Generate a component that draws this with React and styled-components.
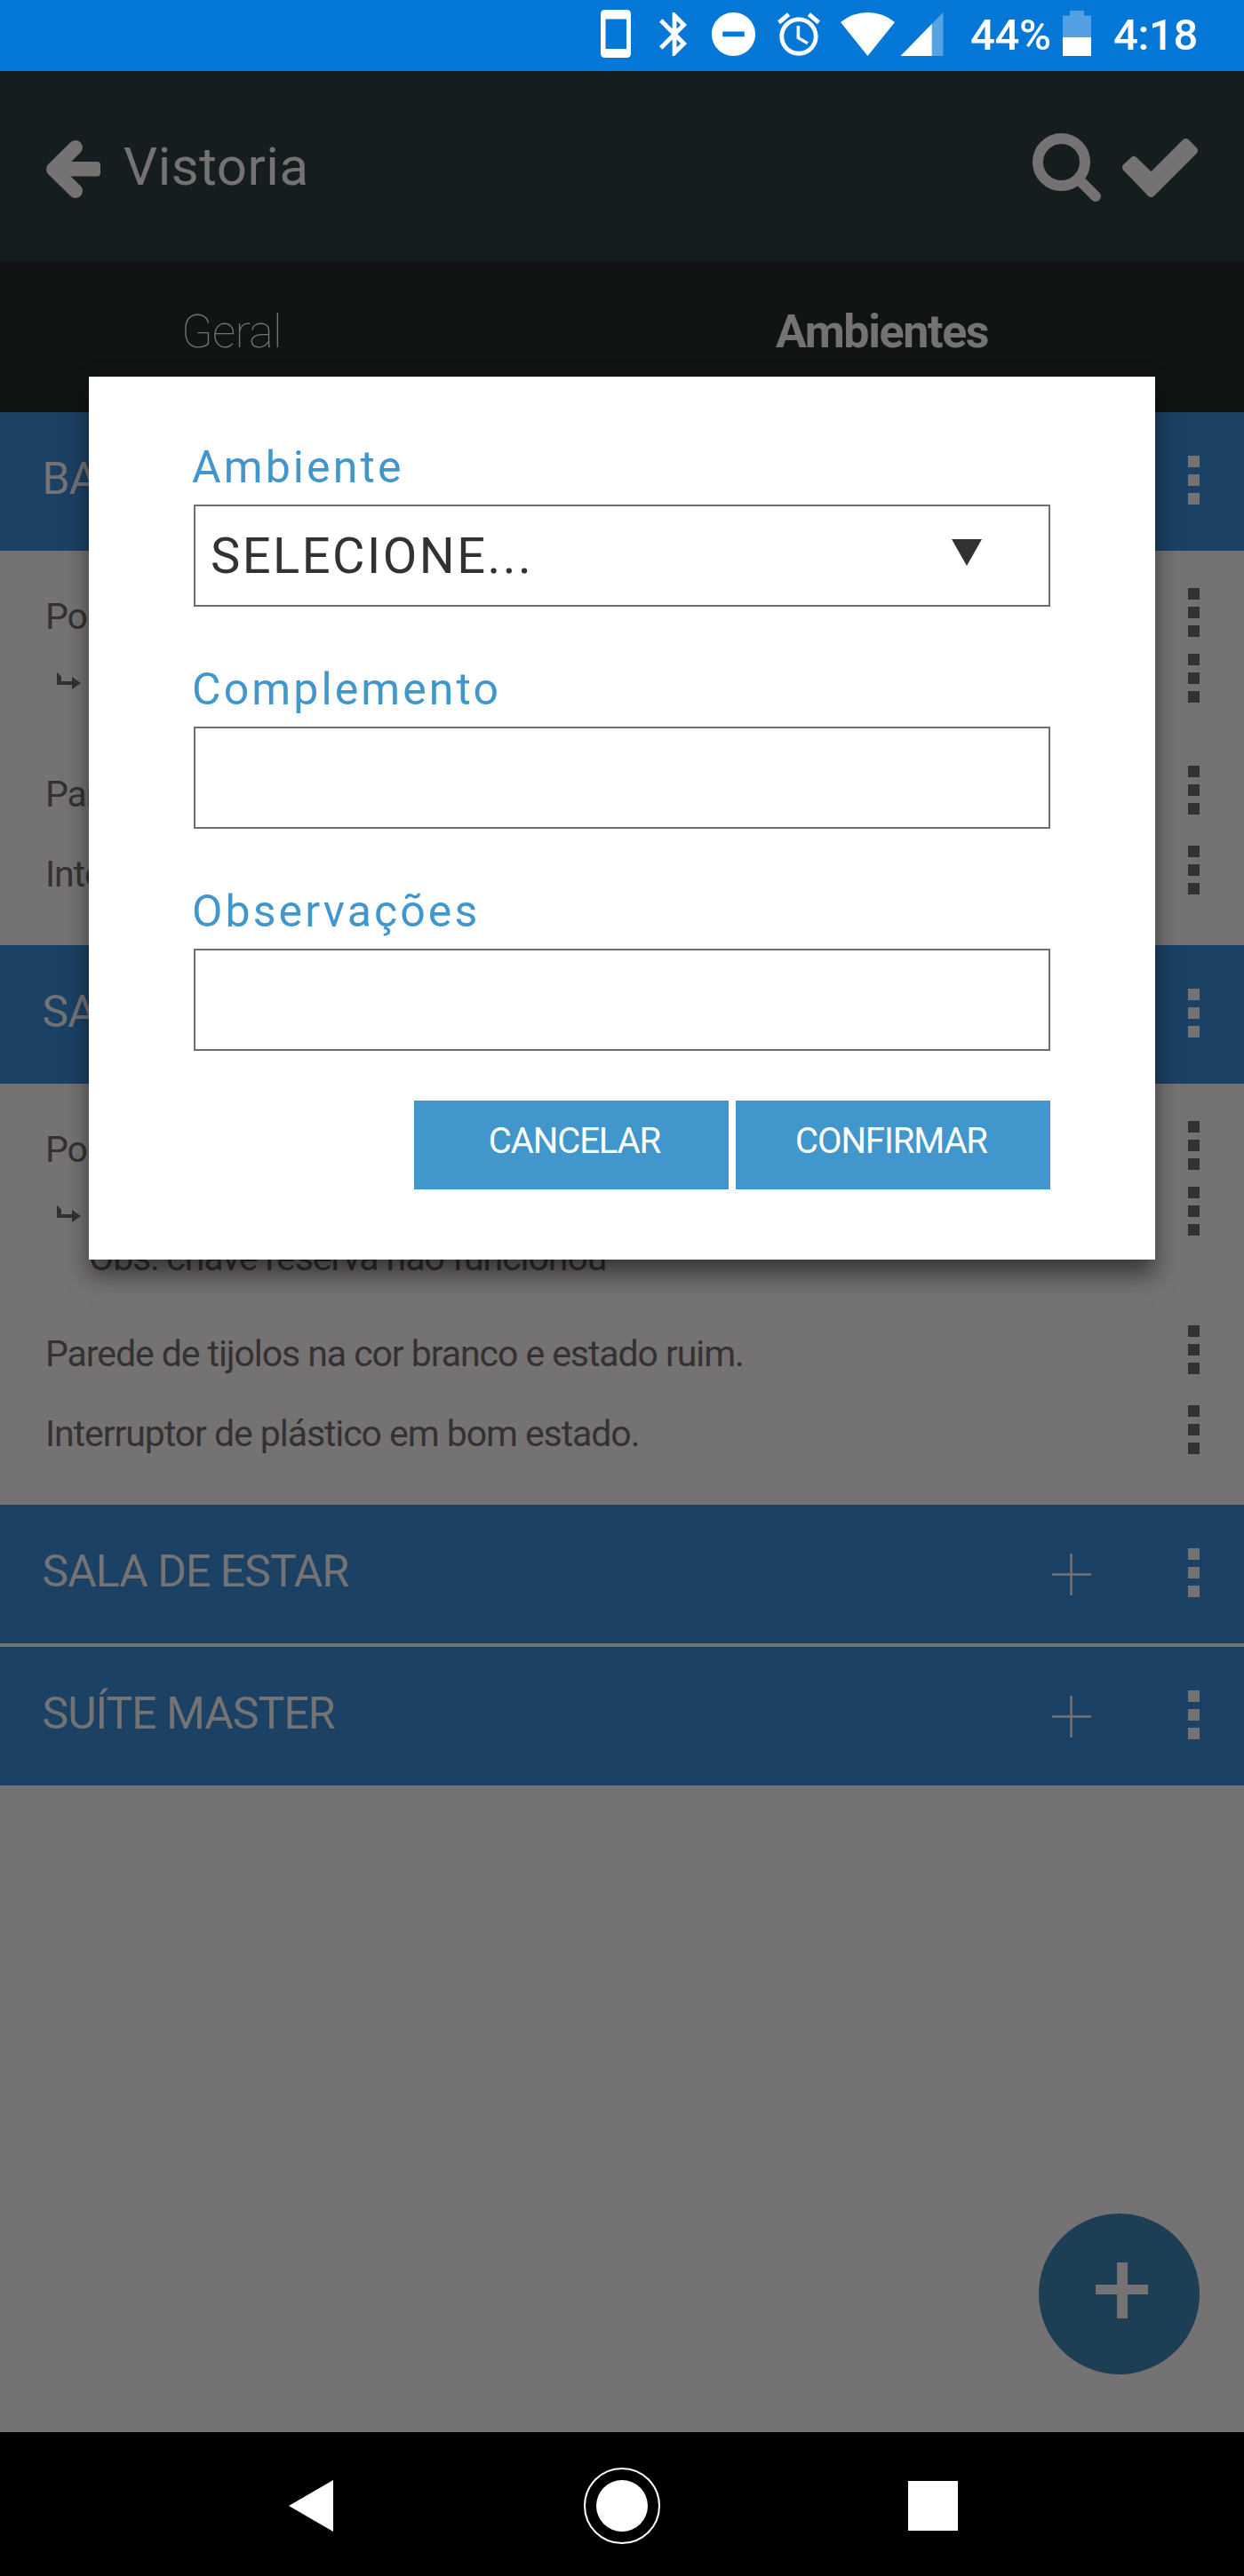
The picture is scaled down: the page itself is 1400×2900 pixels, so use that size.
import React from 'react'
import styled, { createGlobalStyle } from 'styled-components'

const GlobalStyle = createGlobalStyle`
    * {
        box-sizing: border-box;
    }
    body {
        margin: 0;
        font-family: Roboto, "Liberation Sans", sans-serif;
        background-color: #757273;
    }
`

const muted = '#757273'
const dark = '#343132'

const groups = [
    {
        name: 'BANHO',
        items: [
            { text: 'Porta', sub: true },
            { text: 'Parede', space: 71 },
            { text: 'Interruptor', space: 35 },
        ],
    },
    {
        name: 'SALA',
        items: [
            { text: 'Porta', sub: true, obs: 'Obs: chave reserva não funcionou' },
            { text: 'Parede de tijolos na cor branco e estado ruim.', space: 54 },
            { text: 'Interruptor de plástico em bom estado.', space: 35 },
        ],
    },
    { name: 'SALA DE ESTAR' },
    { name: 'SUÍTE MASTER' },
]

const Menu = ({ color }) => (
    <Dots $color={color}>
        <i />
        <i />
        <i />
    </Dots>
)

const StatusIcons = () => (
    <>
        <svg width="34" height="80" viewBox="0 0 34 80">
            <path fill="#fff" fillRule="evenodd" d="M5 11h24q5 0 5 5v44q0 5-5 5H5q-5 0-5-5V16q0-5 5-5zM5.500 21.500v33.500h23.500V21.500z" />
        </svg>
        <StatusSvg $left={32} width="31" height="49" viewBox="5 2 12.710 20" preserveAspectRatio="none">
            <path d="M17.710 7.710L12 2h-1v7.590L6.410 5 5 6.410 10.590 12 5 17.590 6.410 19 11 14.410V22h1l5.710-5.710-4.300-4.290 4.300-4.290zM13 5.830l1.880 1.880L13 9.590V5.830zm1.880 10.460L13 18.170v-3.760l1.880 1.880z" />
        </StatusSvg>
        <StatusSvg $left={28} width="49" height="49" viewBox="2 2 20 20">
            <path d="M12 2C6.480 2 2 6.480 2 12s4.480 10 10 10 10-4.480 10-10S17.520 2 12 2zm5 11.100H7v-2.300h10v2.300z" />
        </StatusSvg>
        <StatusSvg $left={25} width="48" height="49" viewBox="2 1.860 20 20.140">
            <path d="M22 5.720l-4.600-3.860-1.290 1.530 4.600 3.860L22 5.720zM7.880 3.390L6.600 1.860 2 5.710l1.290 1.530 4.590-3.850zM12.500 8H11v6l4.750 2.850.750-1.230-4-2.370V8zM12 4c-4.970 0-9 4.030-9 9s4.020 9 9 9c4.970 0 9-4.030 9-9s-4.030-9-9-9zm0 16c-3.870 0-7-3.130-7-7s3.130-7 7-7 7 3.130 7 7-3.130 7-7 7z" />
        </StatusSvg>
        <StatusSvg $left={23} width="61" height="49" viewBox="0 13 61 49">
            <path d="M0 24Q13.500 13 30.500 13T61 24L30.500 62z" />
        </StatusSvg>
        <StatusSvg $left={6} width="49" height="49" viewBox="0 13 49 50">
            <path opacity=".33" d="M36 26L49 13V63H36z" />
            <path d="M0 63L36 26V63z" />
        </StatusSvg>
    </>
)

const App = () => (
    <Screen>
        <GlobalStyle />
        <StatusBar>
            <StatusIcons />
            <StatusText $width={104} $left={30}>44%</StatusText>
            <svg width="32" height="80" viewBox="0 0 32 80">
                <path fill="#539fe2" d="M8 12h16v5.500h8V42H0V17.500h8z" />
                <path fill="#fff" d="M0 42h32v21H0z" />
            </svg>
            <StatusText $left={25}>4:18</StatusText>
        </StatusBar>

        <Header>
            <ArrowSvg width="61" height="65" viewBox="52 158 61 65">
                <path d="M85 166L60 190.500 85 215" fill="none" stroke={muted} strokeWidth="16" strokeLinecap="round" strokeLinejoin="round" />
                <rect x="66" y="182" width="47" height="16.500" rx="4" fill={muted} />
            </ArrowSvg>
            <Title>Vistoria</Title>
            <svg width="77" height="77" viewBox="1162 150 77 77">
                <circle cx="1194.500" cy="182.500" r="26.500" fill="none" stroke={muted} strokeWidth="12" />
                <path d="M1215 203L1233 221" stroke={muted} strokeWidth="12" strokeLinecap="round" />
            </svg>
            <CheckSvg width="85" height="66" viewBox="1263 155 85 66">
                <path d="M1267.500 187.500L1276 179.500 1295.500 198.500 1334.500 159.500 1343.500 168.500 1295.500 216.500z" fill={muted} stroke={muted} strokeWidth="9" strokeLinejoin="round" />
            </CheckSvg>
        </Header>

        <Tabs>
            <Tab $left={204} $weight={100} $spacing={-0.7}>Geral</Tab>
            <Tab $left={873} $weight={700} $spacing={-1.4}>Ambientes</Tab>
        </Tabs>

        <List>
            {groups.map((g) => (
                <React.Fragment key={g.name}>
                    <GroupBar>
                        <h2>{g.name}</h2>
                        {!g.items && (
                            <svg width="44" height="47" viewBox="0 0 44 47">
                                <path d="M0 23.500H44M21.500 0V47" stroke={muted} strokeWidth="2.500" />
                            </svg>
                        )}
                        <Menu color={muted} />
                    </GroupBar>
                    {g.items && (
                        <Items>
                            {g.items.map((item) => (
                                <React.Fragment key={item.text}>
                                    <Item $space={item.space}>
                                        <p>{item.text}</p>
                                        <Menu color={dark} />
                                    </Item>
                                    {item.sub && (
                                        <Item $space={19} $sub>
                                            <svg width="27" height="19" viewBox="0 0 27 19">
                                                <path fill={dark} d="M0 0l5 4.500v5.500h12V5l10 7-10 7v-5H0z" />
                                            </svg>
                                            <Menu color={dark} />
                                        </Item>
                                    )}
                                    {item.obs && <Obs>{item.obs}</Obs>}
                                </React.Fragment>
                            ))}
                        </Items>
                    )}
                </React.Fragment>
            ))}
        </List>

        <NavBar>
            <svg width="50" height="58" viewBox="0 0 50 58">
                <path fill="#fff" d="M50 0V58L0 29z" />
            </svg>
            <HomeSvg width="86" height="86" viewBox="0 0 86 86">
                <circle cx="43" cy="43" r="42" fill="none" stroke="#fff" strokeWidth="2" />
                <circle cx="43" cy="43" r="29" fill="#fff" />
            </HomeSvg>
            <Square />
        </NavBar>

        <Fab>
            <svg width="59" height="63" viewBox="0 0 59 63">
                <path fill={muted} d="M24 0h12v25h23v11H36v27H24V36H0V25h24z" />
            </svg>
        </Fab>

        <Modal>
            <Label>Ambiente</Label>
            <Field>
                <span>SELECIONE...</span>
                <svg width="34" height="30" viewBox="0 0 34 30">
                    <path fill={dark} d="M0 0h34L17 30z" />
                </svg>
            </Field>
            <Label>Complemento</Label>
            <Field />
            <Label>Observações</Label>
            <Field />
            <Actions>
                <Button $shift={7}>CANCELAR</Button>
                <Button $shift={-4}>CONFIRMAR</Button>
            </Actions>
        </Modal>
    </Screen>
)

export default App

const Screen = styled.div`
    position: relative;
    width: 1400px;
    height: 2900px;
    display: flex;
    flex-direction: column;
    overflow: hidden;
    background-color: ${muted};
`
const StatusBar = styled.div`
    height: 80px;
    flex: none;
    display: flex;
    align-items: flex-start;
    padding-left: 676px;
    background-color: #0477d7;
`
const StatusSvg = styled.svg`
    flex: none;
    margin-top: 14px;
    margin-left: ${(p) => p.$left}px;
    fill: #fff;
`
const StatusText = styled.span`
    width: ${(p) => (p.$width ? `${p.$width}px` : 'auto')};
    margin-left: ${(p) => p.$left}px;
    font-size: 49px;
    font-weight: 500;
    line-height: 80px;
    letter-spacing: -0.4px;
    white-space: nowrap;
    color: #fff;
`
const Header = styled.header`
    height: 214px;
    flex: none;
    display: flex;
    align-items: center;
    padding: 0 52px 5px;
    background-color: #151d1f;
    svg {
        flex: none;
        margin-top: 8px;
    }
`
const ArrowSvg = styled.svg`
    && {
        margin-top: 12px;
    }
`
const Title = styled.h1`
    flex: 1;
    margin: 6px 0 0 26px;
    font-size: 60px;
    font-weight: 400;
    line-height: 70px;
    letter-spacing: 0.5px;
    color: ${muted};
`
const CheckSvg = styled.svg`
    margin-left: 24px;
`
const Tabs = styled.nav`
    height: 170px;
    flex: none;
    display: grid;
    background-color: #101415;
`
const Tab = styled.a`
    grid-area: 1 / 1;
    padding-left: ${(p) => p.$left}px;
    font-size: 52px;
    font-weight: ${(p) => p.$weight};
    line-height: 160px;
    letter-spacing: ${(p) => p.$spacing}px;
    color: ${muted};
`
const List = styled.main`
    flex: 1;
`
const GroupBar = styled.div`
    height: 156px;
    display: flex;
    align-items: flex-start;
    padding: 0 50px 0 47.5px;
    background-color: #1b4165;
    & + & {
        margin-top: 4px;
    }
    h2 {
        flex: 1;
        margin: 0;
        font-size: 50px;
        font-weight: 400;
        line-height: 150px;
        letter-spacing: -1px;
        color: ${muted};
    }
    svg {
        margin: 55px 109px 0 0;
    }
    div {
        margin-top: 49px;
    }
`
const Dots = styled.div`
    width: 13px;
    flex: none;
    display: flex;
    flex-direction: column;
    gap: 8px;
    margin-left: auto;
    i {
        height: 13px;
        background-color: ${(p) => p.$color};
    }
`
const Items = styled.div`
    padding: 42px 0 57px;
`
const Item = styled.div`
    height: 55px;
    display: flex;
    align-items: flex-start;
    margin-top: ${(p) => p.$space || 0}px;
    padding: 0 50px 0 ${(p) => (p.$sub ? 64 : 51)}px;
    p {
        margin: 0;
        font-size: 41px;
        line-height: 65px;
        letter-spacing: -1.07px;
        white-space: nowrap;
        color: ${dark};
    }
    svg {
        margin-top: 21px;
    }
`
const Obs = styled.p`
    height: 47px;
    margin: 0;
    padding-left: 100px;
    font-size: 41px;
    line-height: 51px;
    letter-spacing: -1.05px;
    color: ${dark};
`
const NavBar = styled.div`
    height: 162px;
    flex: none;
    display: flex;
    align-items: center;
    justify-content: space-between;
    padding: 4px 322px 0 325px;
    background-color: #000;
`
const HomeSvg = styled.svg`
    margin-left: 3px;
`
const Square = styled.div`
    width: 56px;
    height: 56px;
    background-color: #fff;
`
const Fab = styled.button`
    position: absolute;
    left: 1169px;
    top: 2492px;
    width: 181px;
    height: 181px;
    display: flex;
    padding: 55px 0 0 64px;
    border: none;
    border-radius: 50%;
    background-color: #1c3f55;
`
const Modal = styled.div`
    position: absolute;
    left: 100px;
    top: 424px;
    width: 1200px;
    height: 994px;
    padding: 67px 118px 0;
    background-color: #fff;
    box-shadow: 0 17px 24px rgba(0, 0, 0, 0.5);
`
const Label = styled.label`
    display: block;
    height: 77px;
    margin-left: -2px;
    font-size: 50px;
    line-height: 70px;
    letter-spacing: 3.1px;
    color: #4197cb;
`
const Field = styled.div`
    height: 115px;
    display: flex;
    align-items: flex-start;
    justify-content: space-between;
    margin-bottom: 58px;
    padding: 0 75px 0 17px;
    border: 2px solid #6f6e70;
    font-size: 56px;
    line-height: 112px;
    letter-spacing: 2.5px;
    color: ${dark};
    svg {
        margin-top: 37px;
    }
`
const Actions = styled.div`
    display: flex;
    justify-content: flex-end;
    gap: 8px;
    margin-top: -2px;
`
const Button = styled.button`
    width: 354px;
    height: 100px;
    padding: 0 0 10px;
    border: none;
    background-color: #4197cb;
    color: #fff;
    font-family: inherit;
    font-size: 40px;
    letter-spacing: -1.1px;
    text-indent: ${(p) => p.$shift}px;
`
